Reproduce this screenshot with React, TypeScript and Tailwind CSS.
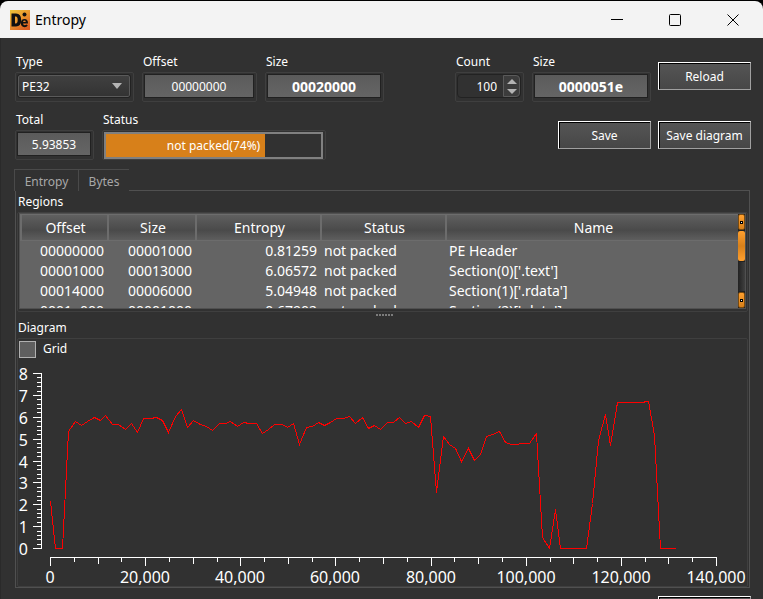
import { useState } from "react";
import type { ReactNode } from "react";

const points: [number, number][] = [
  [50, 501], [55, 548], [62, 548], [68, 431], [75, 421], [81, 425], [87, 421], [94, 417], [100, 420], [105, 415],
  [112, 424], [118, 424], [125, 429], [131, 423], [137, 432], [143, 418], [150, 418], [156, 417], [162, 420], [168, 432],
  [175, 416], [181, 409], [187, 427], [193, 420], [200, 424], [206, 426], [212, 430], [219, 423], [225, 423], [230, 421],
  [237, 426], [243, 422], [249, 423], [256, 423], [262, 433], [268, 429], [274, 424], [282, 424], [287, 427], [293, 423],
  [299, 444], [306, 427], [312, 426], [318, 422], [324, 425], [330, 422], [336, 418], [343, 418], [349, 416], [355, 423],
  [362, 417], [368, 428], [374, 425], [380, 429], [387, 422], [393, 422], [399, 417], [405, 423], [411, 421], [418, 427],
  [424, 415], [430, 416], [436, 492], [443, 436], [449, 444], [455, 448], [461, 461], [468, 448], [474, 460], [480, 454],
  [486, 436], [492, 434], [499, 431], [505, 442], [511, 444], [517, 444], [520, 443], [529, 443], [536, 433], [542, 537],
  [549, 548], [555, 509], [560, 548], [586, 548], [592, 503], [598, 440], [605, 414], [610, 445], [617, 402], [642, 402],
  [646, 401], [648, 401], [654, 435], [660, 548], [675, 548],
];

const yTicks = Array.from({ length: 41 }, (_, i) => i);
const xTicks = Array.from({ length: 29 }, (_, i) => i);

const rows = [
  ["00000000", "00001000", "0.81259", "not packed", "PE Header"],
  ["00001000", "00013000", "6.06572", "not packed", "Section(0)['.text']"],
  ["00014000", "00006000", "5.04948", "not packed", "Section(1)['.rdata']"],
  ["0001a000", "00001000", "0.67902", "not packed", "Section(2)['.data']"],
];

function Chart() {
  return (
    <svg
      viewBox="18 358 729 228"
      className="block w-full"
      role="img"
      aria-label="Entropy diagram"
      fontFamily="'Noto Sans', sans-serif"
      fontSize="16"
      fill="#ffffff"
    >
      <g stroke="#ffffff" strokeWidth="1" shapeRendering="crispEdges">
        <line x1="41.5" y1="373" x2="41.5" y2="549" />
        {yTicks.map((t) => {
          const y = Math.round(548 - t * 4.375) + 0.5;
          return <line key={t} x1={t % 5 === 0 ? 33 : 37} y1={y} x2="41" y2={y} />;
        })}
        <line x1="50" y1="557.5" x2="717" y2="557.5" />
        {xTicks.map((t) => {
          const x = Math.round(50 + t * 23.786) + 0.5;
          return <line key={t} x1={x} y1="557" x2={x} y2={t % 4 === 0 ? 566 : t % 2 === 0 ? 564 : 562} />;
        })}
      </g>
      {[0, 1, 2, 3, 4, 5, 6, 7, 8].map((v) => (
        <text key={v} x="28" y={Math.round(555 - v * 21.875)} textAnchor="end">
          {v}
        </text>
      ))}
      {[0, 1, 2, 3, 4, 5, 6, 7].map((v) => (
        <text key={v} x={Math.round(50 + v * 95.14)} y="583" textAnchor="middle">
          {(v * 20000).toLocaleString("en-US")}
        </text>
      ))}
      <polyline
        points={points.map(([x, y]) => `${x + 0.5},${y + 0.5}`).join(" ")}
        fill="none"
        stroke="#ff0000"
        strokeWidth="1"
        shapeRendering="crispEdges"
      />
    </svg>
  );
}

function Field({ id, label, className, children }: { id: string; label: string; className: string; children: ReactNode }) {
  return (
    <div className={className}>
      <label htmlFor={id} className="block h-5 pl-px leading-5">
        {label}
      </label>
      <div className="h-[30px] rounded-xs border border-[#3f3f3f] pt-px pr-0.5 pl-px">{children}</div>
    </div>
  );
}

const hexBox =
  "block h-6 w-full border border-[#212121] bg-linear-to-b from-[#5b5b5b] to-[#656565] pt-px text-center text-white outline-none";

function PushButton({ children }: { children: ReactNode }) {
  return (
    <button
      type="button"
      className="h-7 w-[93px] border border-t-white border-r-[#a0a0a0] border-b-[#a0a0a0] border-l-white bg-linear-to-b from-[#555555] to-[#474747] pt-px whitespace-nowrap shadow-[inset_1px_1px_0_#000]"
    >
      {children}
    </button>
  );
}

function ScrollEnd({ label }: { label: string }) {
  return (
    <button type="button" aria-label={label} className="flex h-4 w-full items-center justify-center rounded-xs border border-[#7a4b10] bg-linear-to-b from-[#ffa02f] to-[#d7801a]">
      <span className="block size-px bg-white outline outline-black" />
    </button>
  );
}

const th = "border-t border-b border-[#6c6c6c] border-l-2 p-0 pl-0.5 font-normal";
const headFill = "bg-linear-to-b from-[#616161] via-[#4a4a4a] via-60% to-[#606060]";

export default function App() {
  const [type, setType] = useState("PE32");
  const [count, setCount] = useState(100);
  const [grid, setGrid] = useState(false);

  return (
    <div className="flex h-screen flex-col overflow-hidden bg-black font-['Noto_Sans',sans-serif] text-xs text-white">
      <header className="mt-px flex h-[37px] shrink-0 items-center rounded-t-lg bg-[#f3f3f3] pr-px pl-[10px] text-black">
        <svg width="20" height="20" viewBox="0 0 20 20" aria-hidden="true">
          <defs>
            <linearGradient id="logo" x1="0" y1="0" x2="0.7" y2="1">
              <stop offset="0" stopColor="#ecc53a" />
              <stop offset="0.5" stopColor="#eb9a2e" />
              <stop offset="1" stopColor="#dd5f22" />
            </linearGradient>
          </defs>
          <rect width="20" height="20" fill="url(#logo)" />
          <path d="M1.500 3.500H6q5.200.2 5.200 6.500T6 16.500H1.500ZM5 6.500v7h.8q1.900-.2 1.900-3.500t-1.900-3.500Z" fill="#111" fillRule="evenodd" />
          <path d="M18 13.500h-5q.2 1.800 1.700 1.800 1 0 1.500-.8l1.600.7q-1 2-3.200 2-3.700-.3-3.800-4.100.2-3.900 3.800-4.100 3.500.2 3.400 4.500Zm-5-1.600h2.800q-.2-1.300-1.300-1.300T13 11.900Z" fill="#111" fillRule="evenodd" />
          <circle cx="14.500" cy="4.500" r="2" fill="#111" />
        </svg>
        <h1 className="ml-[5px] flex-1 text-sm">Entropy</h1>
        <div className="flex">
          <button type="button" aria-label="Minimize" className="flex w-[58px] justify-center">
            <svg width="12" height="12" viewBox="0 0 12 12"><path d="M0 5.500h12" stroke="#000" /></svg>
          </button>
          <button type="button" aria-label="Maximize" className="flex w-[58px] justify-center">
            <svg width="12" height="12" viewBox="0 0 12 12"><rect x="0.5" y="0.5" width="11" height="11" rx="1" fill="none" stroke="#000" /></svg>
          </button>
          <button type="button" aria-label="Close" className="flex w-[58px] justify-center">
            <svg width="12" height="12" viewBox="0 0 12 12"><path d="M.5.5l11 11M11.500.5l-11 11" stroke="#000" fill="none" /></svg>
          </button>
        </div>
      </header>

      <main className="flex-1 border-l border-[#2a2a2a] bg-[#313131] pt-[14px] pr-3 pl-[14px]">
        <div className="flex items-start">
          <Field id="type" label="Type" className="w-[119px]">
            <div className="relative p-px">
              <select
                id="type"
                value={type}
                onChange={(e) => setType(e.target.value)}
                className="block h-[22px] w-full appearance-none rounded-xs border border-[#5a5a5a] bg-linear-to-b from-[#404040] to-[#333333] pt-px pl-[3px] text-white outline outline-[#222222]"
              >
                <option>PE32</option>
                <option>Binary</option>
              </select>
              <svg className="pointer-events-none absolute top-[9px] right-[9px]" width="10" height="6" viewBox="0 0 10 6">
                <path d="M0 0h10L5 6Z" fill="#b4b4b4" />
              </svg>
            </div>
          </Field>
          <Field id="offset" label="Offset" className="ml-2 w-[115px]">
            <input id="offset" readOnly value="00000000" className={hexBox} />
          </Field>
          <Field id="size" label="Size" className="ml-2 w-[119px]">
            <input id="size" readOnly value="00020000" className={`${hexBox} text-sm font-bold`} />
          </Field>
          <div className="flex-1" />
          <Field id="count" label="Count" className="w-[69px]">
            <div className="flex h-6 rounded-sm border border-[#222222]">
              <input
                id="count"
                inputMode="numeric"
                value={count}
                onChange={(e) => setCount(Number(e.target.value) || 0)}
                className="w-0 flex-1 pt-px pr-[6px] text-right text-white outline-none"
              />
              <div className="flex w-[17px] flex-col rounded-r-sm border border-[#5a5a5a] bg-[#3c3c3c]">
                <button type="button" aria-label="Increase" onClick={() => setCount(count + 1)} className="flex flex-1 items-center justify-center">
                  <svg width="10" height="5" viewBox="0 0 10 5"><path d="M0 5h10L5 0Z" fill="#b4b4b4" /></svg>
                </button>
                <button type="button" aria-label="Decrease" onClick={() => setCount(count - 1)} className="flex flex-1 items-center justify-center">
                  <svg width="10" height="5" viewBox="0 0 10 5"><path d="M0 0h10L5 5Z" fill="#b4b4b4" /></svg>
                </button>
              </div>
            </div>
          </Field>
          <Field id="step" label="Size" className="ml-2 w-[119px]">
            <input id="step" readOnly value="0000051e" className={`${hexBox} text-sm font-bold`} />
          </Field>
          <div className="mt-[10px] ml-[7px]">
            <PushButton>Reload</PushButton>
          </div>
        </div>

        <div className="mt-2 flex items-start">
          <Field id="total" label="Total" className="w-[79px]">
            <input id="total" readOnly value="5.93853" className={hexBox} />
          </Field>
          <Field id="status" label="Status" className="ml-2 w-[224px]">
            <div
              id="status"
              role="progressbar"
              aria-valuenow={74}
              className="relative flex h-[27px] items-center justify-center border-2 border-[#808080]"
            >
              <div className="absolute inset-y-0 left-0 w-[74%] bg-[#d7801a]" />
              <span className="relative">not packed(74%)</span>
            </div>
          </Field>
          <div className="flex-1" />
          <div className="mt-[11px] flex gap-[7px]">
            <PushButton>Save</PushButton>
            <PushButton>Save diagram</PushButton>
          </div>
        </div>

        <div className="mt-[9px] mr-px -ml-px flex h-[22px] text-[#a8a8a8]" role="tablist">
          <button type="button" role="tab" aria-selected="true" className="w-16 border-t border-l border-[#4a4a4a] pt-0.5">
            Entropy
          </button>
          <button type="button" role="tab" aria-selected="false" className="w-[51px] border-t border-l border-[#4a4a4a] pt-0.5">
            Bytes
          </button>
          <div className="flex-1 border-b border-[#505050]" />
        </div>

        <section className="mr-px border-r border-b border-l border-[#505050] px-px">
          <h2 className="h-[21px] pl-px leading-[21px]">Regions</h2>
          <div className="rounded-xs border border-[#3f3f3f] px-px pb-0.5">
            <div className="flex h-24 overflow-hidden border border-[#505050] bg-[#646464]">
              <div className="min-w-0 flex-1 overflow-y-auto [scrollbar-width:none]">
                <table className="w-full table-fixed border-separate border-spacing-0 text-sm">
                  <colgroup>
                    <col className="w-[87px]" />
                    <col className="w-[88px]" />
                    <col className="w-[125px]" />
                    <col className="w-[125px]" />
                    <col />
                  </colgroup>
                  <thead>
                    <tr className={`h-[27px] ${headFill}`}>
                      <th className={th}>Offset</th>
                      <th className={th}>Size</th>
                      <th className={th}>Entropy</th>
                      <th className={th}>Status</th>
                      <th className={th}>Name</th>
                    </tr>
                  </thead>
                  <tbody>
                    {rows.map((r) => (
                      <tr key={r[0]} className="h-5 leading-5 whitespace-nowrap">
                        <td className="p-0 pr-[3px] text-right">{r[0]}</td>
                        <td className="p-0 pr-[3px] text-right">{r[1]}</td>
                        <td className="p-0 pr-[3px] text-right">{r[2]}</td>
                        <td className="p-0 pl-1">{r[3]}</td>
                        <td className="p-0 pl-1">{r[4]}</td>
                      </tr>
                    ))}
                  </tbody>
                </table>
              </div>
              <div className="flex w-[7px] flex-col gap-px bg-[#222222]">
                <ScrollEnd label="Scroll up" />
                <div className="h-[30px] rounded-xs bg-linear-to-b from-[#ffa02f] via-[#d7801a] to-[#ffa02f]" />
                <div className="flex-1 bg-linear-to-r from-[#222222] to-[#404040]" />
                <ScrollEnd label="Scroll down" />
              </div>
            </div>
          </div>
          <div className="flex h-[6px] items-center justify-center gap-px pl-1">
            {[0, 1, 2, 3, 4, 5].map((i) => (
              <span key={i} className="size-[2px] bg-[#7c7c7c]" />
            ))}
          </div>
          <h2 className="h-5 pl-px leading-5">Diagram</h2>
          <div className="rounded-xs border border-[#3f3f3f]">
            <label className="flex h-[19px] items-center gap-[7px] pt-px pl-px">
              <input
                type="checkbox"
                checked={grid}
                onChange={(e) => setGrid(e.target.checked)}
                className="size-[17px] appearance-none border border-[#b0b0b0] bg-[#5f5f5f] checked:bg-[#d7801a]"
              />
              Grid
            </label>
            <Chart />
          </div>
        </section>

        <div className="mt-2 flex justify-end">
          <PushButton>Close</PushButton>
        </div>
      </main>
    </div>
  );
}
